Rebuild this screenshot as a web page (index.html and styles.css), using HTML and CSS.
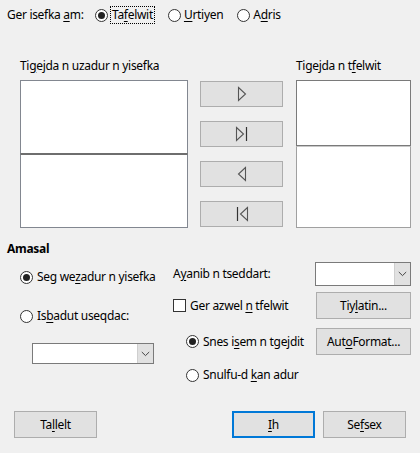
FILE: index.html
```html
<!DOCTYPE html>
<html>
<head>
<meta charset="utf-8">
<link rel="stylesheet" href="styles.css">
</head>
<body>
<div class="dlg">
  <div class="top">
    <span class="top-label">Ger isefka <u>a</u>m:</span>
    <div class="top-radios">
      <span class="opt"><span class="rb on"></span><span class="focus">Ta<u>f</u>elwit</span></span>
      <span class="opt"><span class="rb"></span><span><u>U</u>rtiyen</span></span>
      <span class="opt"><span class="rb"></span><span>A<u>d</u>ris</span></span>
    </div>
  </div>

  <div class="lists">
    <div class="col-left">
      <div class="cap">Ti<u>g</u>ejda n uzadur n yisefka</div>
      <div class="listbox">
        <div class="pane lp1"></div>
        <div class="pane lp2"></div>
      </div>
    </div>
    <div class="arrows">
      <div class="btn arrow"><svg width="10" height="16" viewBox="0 0 10 16"><path d="M1.5 1.5 L8.5 8 L1.5 14.5 Z" fill="none" stroke="#555" stroke-width="1.1"/></svg></div>
      <div class="btn arrow"><svg width="14" height="16" viewBox="0 0 14 16"><path d="M1.5 1.5 L8.5 8 L1.5 14.5 Z" fill="none" stroke="#555" stroke-width="1.1"/><path d="M11.5 1 V15" stroke="#333" stroke-width="1.2"/></svg></div>
      <div class="btn arrow"><svg width="10" height="16" viewBox="0 0 10 16"><path d="M8.5 1.5 L1.5 8 L8.5 14.5 Z" fill="none" stroke="#555" stroke-width="1.1"/></svg></div>
      <div class="btn arrow"><svg width="14" height="16" viewBox="0 0 14 16"><path d="M2.5 1 V15" stroke="#333" stroke-width="1.2"/><path d="M12.5 1.5 L5.5 8 L12.5 14.5 Z" fill="none" stroke="#555" stroke-width="1.1"/></svg></div>
    </div>
    <div class="col-right">
      <div class="cap">Tigejda n t<u>f</u>elwit</div>
      <div class="listbox">
        <div class="pane rp1"></div>
        <div class="pane rp2"></div>
      </div>
    </div>
  </div>

  <div class="heading">Amasal</div>

  <div class="options">
    <div class="opt-left">
      <div class="row r-seg"><span class="rb on"></span><span>Seg we<u>z</u>adur n yisefka</span></div>
      <div class="row r-isb"><span class="rb"></span><span>Is<u>b</u>adut useqdac:</span></div>
      <div class="combo c-left"><div class="combo-field"></div><div class="combo-btn"><svg width="9" height="6" viewBox="0 0 9 6"><path d="M0.8 1 L4.5 4.6 L8.2 1" fill="none" stroke="#444" stroke-width="1"/></svg></div></div>
    </div>
    <div class="opt-right">
      <div class="grid-row g1">
        <span class="glabel"><span>A<u>y</u>anib n tseddart:</span></span>
        <div class="combo c-right"><div class="combo-field"></div><div class="combo-btn"><svg width="9" height="6" viewBox="0 0 9 6"><path d="M0.8 1 L4.5 4.6 L8.2 1" fill="none" stroke="#444" stroke-width="1"/></svg></div></div>
      </div>
      <div class="grid-row g2">
        <span class="glabel check-row"><span class="cb"></span><span>Ger azwel <u>n</u> tfelwit</span></span>
        <div class="btn side">Tiy<u>l</u>atin...</div>
      </div>
      <div class="grid-row g3">
        <span class="glabel sub"><span class="rb on"></span><span>Snes i<u>s</u>em n tgejdit</span></span>
        <div class="btn side">Aut<u>o</u>Format...</div>
      </div>
      <div class="grid-row g4">
        <span class="glabel sub"><span class="rb"></span><span>Snulfu-d <u>k</u>an adur</span></span>
      </div>
    </div>
  </div>

  <div class="footer">
    <div class="btn foot">Ta<u>l</u>lelt</div>
    <div class="foot-right">
      <div class="btn foot default"><u>I</u>h</div>
      <div class="btn foot">Se<u>f</u>sex</div>
    </div>
  </div>
</div>
</body>
</html>
```

FILE: styles.css
```css
* { box-sizing: border-box; }
html, body {
  margin: 0;
  padding: 0;
  background: #f0f0f0;
}
body {
  width: 420px;
  height: 453px;
  overflow: hidden;
  font-family: "Noto Sans", "Open Sans", sans-serif;
  font-size: 12px;
  letter-spacing: -0.3px;
  color: #000;
  line-height: 16px;
}
u { text-decoration: underline; text-underline-offset: 2px; }

.rb {
  display: inline-block;
  width: 13px;
  height: 13px;
  border: 1px solid #333;
  border-radius: 50%;
  background: #fff;
  position: relative;
  flex: none;
}
.rb.on::after {
  content: "";
  position: absolute;
  left: 2px; top: 2px;
  width: 7px; height: 7px;
  border-radius: 50%;
  background: #222;
}
.cb {
  display: inline-block;
  width: 13px;
  height: 13px;
  border: 1px solid #333;
  background: #fff;
  flex: none;
}

.top {
  height: 30px;
  display: flex;
  align-items: center;
  padding-left: 7px;
}
.top-label { width: 88px; }
.top-radios { display: flex; gap: 14px; }
.opt { display: flex; align-items: center; gap: 3px; }
.focus {
  outline: 1px dotted #000;
  outline-offset: 0;
  padding: 0 1px;
}

.lists {
  margin-top: 28px;
  display: flex;
  padding-left: 20px;
}
.cap { height: 16px; margin-bottom: 6px; white-space: nowrap; }
.col-left { width: 168px; }
.col-right { width: 115px; margin-left: 13px; }
.listbox { display: flex; flex-direction: column; }
.pane { background: #fff; border: 1px solid #828790; }
.lp1 { height: 74px; border-bottom-color: #6e6e6e; }
.lp2 { height: 74px; border-top-color: #6e6e6e; }
.rp1 { height: 66px; border-color: #7a7a7a; }
.rp2 { height: 82px; border-color: #a0a0a0; border-top-color: #c8c8c8; }

.btn {
  background: #e1e1e1;
  border: 1px solid #adadad;
  display: flex;
  align-items: center;
  justify-content: center;
}
.arrows {
  width: 83px;
  margin-left: 12px;
  padding-top: 23px;
  display: flex;
  flex-direction: column;
  gap: 14px;
}
.arrow { height: 26px; }

.heading {
  margin-top: 13px;
  padding-left: 7px;
  font-weight: bold;
}

.options { display: flex; }
.opt-left { width: 173px; padding-left: 20px; padding-top: 10px; }
.row { display: flex; align-items: center; gap: 4px; height: 20px; }
.r-isb { margin-top: 19px; }
.combo {
  display: flex;
  border: 1px solid #7a7a7a;
  background: #fff;
}
.combo-field { flex: 1; }
.combo-btn {
  width: 16px;
  background: #e1e1e1;
  border-left: 1px solid #cfcfcf;
  display: flex;
  align-items: center;
  justify-content: center;
}
.c-left { margin-top: 17px; margin-left: 12px; width: 122px; height: 21px; }
.c-right { width: 96px; height: 24px; }

.opt-right { width: 247px; }
.grid-row { display: flex; align-items: center; }
.glabel { width: 142px; display: flex; align-items: center; gap: 4px; white-space: nowrap; }
.sub { padding-left: 13px; }
.g1 { margin-top: 5px; height: 24px; }
.g2 { margin-top: 6px; height: 27px; }
.g3 { margin-top: 9px; height: 27px; }
.g4 { margin-top: 10px; height: 20px; }
.side { width: 95px; height: 27px; margin-left: 1px; }

.footer {
  margin-top: 26px;
  display: flex;
  justify-content: space-between;
  padding: 0 14px;
}
.foot-right { display: flex; gap: 8px; }
.foot { width: 83px; height: 27px; }
.default { border: 2px solid #0078d7; }
```
